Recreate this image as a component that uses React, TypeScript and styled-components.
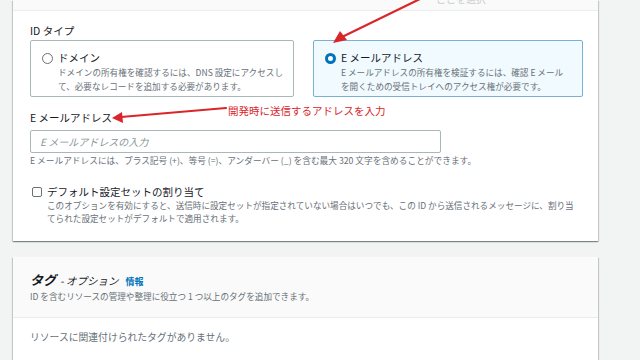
import React from "react";
import styled, { createGlobalStyle } from "styled-components";

const GlobalStyle = createGlobalStyle`
  body {
    margin: 0;
    background: #f2f3f3;
    font-family: "Noto Sans CJK JP", "Noto Sans", sans-serif;
    color: #16191f;
  }
`;

const Page = styled.div`
  position: relative;
  width: 640px;
  height: 360px;
  overflow: hidden;
  padding-left: 13px;
  box-sizing: border-box;
  display: flex;
  flex-direction: column;
  gap: 16px;
`;

const Card = styled.section<{ $grow?: boolean }>`
  width: 585px;
  background: #fff;
  box-shadow: 0 1px 1px 0 rgba(0, 28, 36, 0.3), 1px 1px 1px 0 rgba(0, 28, 36, 0.15),
    -1px 1px 1px 0 rgba(0, 28, 36, 0.15);
  flex: ${({ $grow }) => ($grow ? "1" : "none")};
`;

const CardHeader = styled.div<{ $cut?: boolean }>`
  background: #fafafa;
  border-bottom: 1px solid #eaeded;
  padding: ${({ $cut }) => ($cut ? "0" : "15px 17px 14px")};
  height: ${({ $cut }) => ($cut ? "10px" : "auto")};
`;

const CardBody = styled.div<{ $pad: string }>`
  padding: ${({ $pad }) => $pad};
`;

const Label = styled.div`
  font-size: 10.5px;
  line-height: 14px;
  color: #16191f;
`;

const Tiles = styled.div`
  display: grid;
  grid-template-columns: 264px 270px;
  gap: 19px;
  margin-top: 2px;
`;

const Tile = styled.div<{ $selected?: boolean }>`
  box-sizing: border-box;
  height: 57px;
  padding: 10px 11px 5px 11px;
  border: 1px solid ${({ $selected }) => ($selected ? "#79b0d4" : "#aab7b8")};
  background: ${({ $selected }) => ($selected ? "#f1faff" : "#fff")};
  border-radius: 2px;
  display: flex;
  gap: 5px;
`;

const Radio = styled.span<{ $checked?: boolean }>`
  flex: none;
  box-sizing: border-box;
  width: 11px;
  height: 11px;
  margin-top: 2px;
  border-radius: 50%;
  border: ${({ $checked }) => ($checked ? "3.5px solid #0073bb" : "1px solid #687078")};
  background: #fff;
`;

const TileText = styled.div`
  display: flex;
  flex-direction: column;
  min-width: 0;
`;

const TileTitle = styled.div`
  font-size: 10.5px;
  line-height: 14px;
  white-space: nowrap;
`;

const Desc = styled.div<{ $lh?: number }>`
  font-size: 8.6px;
  line-height: ${({ $lh }) => $lh ?? 14}px;
  color: #687078;
  white-space: nowrap;
`;

const Field = styled.div`
  margin-top: 14px;
  display: flex;
  flex-direction: column;
`;

const Input = styled.input`
  box-sizing: border-box;
  width: 411px;
  height: 23px;
  margin-top: 5px;
  border: 1px solid #aab7b8;
  border-radius: 2px;
  padding: 0 9px;
  font-family: inherit;
  font-size: 10px;
  outline: none;
  &::placeholder {
    color: #879596;
    font-style: italic;
  }
`;

const Hint = styled.div`
  margin-top: 1px;
  font-size: 8.7px;
  line-height: 14px;
  color: #687078;
  white-space: nowrap;
`;

const CheckRow = styled.div`
  margin-top: 17px;
  display: flex;
  gap: 5px;
`;

const CheckBox = styled.span`
  flex: none;
  box-sizing: border-box;
  width: 10px;
  height: 10px;
  margin: 2px 0 0 2px;
  border: 1px solid #687078;
  border-radius: 2px;
  background: #fff;
`;

const Heading = styled.h2`
  margin: 0;
  font-size: 13px;
  line-height: 16px;
  font-weight: 700;
  font-style: italic;
  display: flex;
  align-items: baseline;
  gap: 4px;
`;

const Optional = styled.span`
  font-size: 10.5px;
  font-weight: 400;
  font-style: italic;
`;

const InfoLink = styled.span`
  font-size: 9px;
  font-weight: 700;
  font-style: normal;
  color: #0073bb;
  margin-left: 3px;
`;

const Empty = styled.div`
  font-size: 9.8px;
  line-height: 14px;
  color: #687078;
`;

const Note = styled.span<{ $x: number; $y: number; $faded?: boolean }>`
  position: absolute;
  left: ${({ $x }) => $x}px;
  top: ${({ $y }) => $y}px;
  font-size: ${({ $faded }) => ($faded ? "10px" : "10.5px")};
  line-height: 14px;
  color: ${({ $faded }) => ($faded ? "#c9cccc" : "#d9262b")};
  white-space: nowrap;
`;

const Overlay = styled.svg`
  position: absolute;
  left: 0;
  top: 0;
  pointer-events: none;
`;

export default function App() {
  return (
    <>
      <GlobalStyle />
      <Page>
        <Card>
          <CardHeader $cut />
          <CardBody $pad="13px 17px 16px">
            <Label>ID タイプ</Label>
            <Tiles>
              <Tile>
                <Radio />
                <TileText>
                  <TileTitle>ドメイン</TileTitle>
                  <Desc>ドメインの所有権を確認するには、DNS 設定にアクセスし</Desc>
                  <Desc>て、必要なレコードを追加する必要があります。</Desc>
                </TileText>
              </Tile>
              <Tile $selected>
                <Radio $checked />
                <TileText>
                  <TileTitle>E メールアドレス</TileTitle>
                  <Desc>E メールアドレスの所有権を検証するには、確認 E メール</Desc>
                  <Desc>を開くための受信トレイへのアクセス権が必要です。</Desc>
                </TileText>
              </Tile>
            </Tiles>
            <Field>
              <Label>E メールアドレス</Label>
              <Input placeholder="E メールアドレスの入力" />
              <Hint>
                E メールアドレスには、プラス記号 (+)、等号 (=)、アンダーバー (_) を含む最大 320
                文字を含めることができます。
              </Hint>
            </Field>
            <CheckRow>
              <CheckBox />
              <TileText>
                <TileTitle>デフォルト設定セットの割り当て</TileTitle>
                <Desc $lh={13}>
                  このオプションを有効にすると、送信時に設定セットが指定されていない場合はいつでも、この ID
                  から送信されるメッセージに、割り当
                </Desc>
                <Desc $lh={13}>てられた設定セットがデフォルトで適用されます。</Desc>
              </TileText>
            </CheckRow>
          </CardBody>
        </Card>
        <Card $grow>
          <CardHeader>
            <Heading>
              タグ<Optional>- オプション</Optional>
              <InfoLink>情報</InfoLink>
            </Heading>
            <Desc $lh={13}>ID を含むリソースの管理や整理に役立つ 1 つ以上のタグを追加できます。</Desc>
          </CardHeader>
          <CardBody $pad="12px 17px">
            <Empty>リソースに関連付けられたタグがありません。</Empty>
          </CardBody>
        </Card>
        <Note $x={436} $y={-8} $faded>
          ここを選択
        </Note>
        <Note $x={228} $y={104}>
          開発時に送信するアドレスを入力
        </Note>
        <Overlay width="640" height="360" viewBox="0 0 640 360">
          <g stroke="#d9262b" strokeWidth="2.2" fill="#d9262b" strokeLinecap="round">
            <line x1="422" y1="-2" x2="342" y2="37" />
            <polygon points="333,43 340,31 347,40" stroke="none" />
            <line x1="226" y1="108" x2="121" y2="117" />
            <polygon points="112,118 122,112 123,123" stroke="none" />
          </g>
        </Overlay>
      </Page>
    </>
  );
}
